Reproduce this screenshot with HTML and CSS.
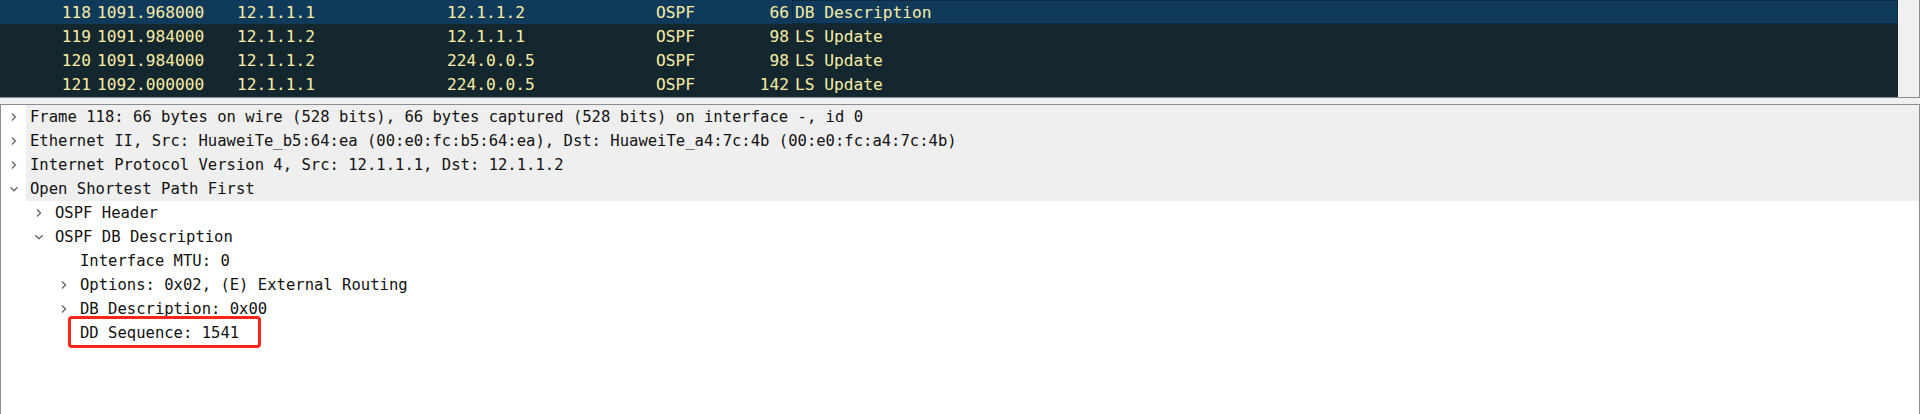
FILE: index.html
```html
<!DOCTYPE html>
<html>
<head>
<meta charset="utf-8">
<link rel="stylesheet" href="styles.css">
</head>
<body>
<div class="app">
  <div class="list-pane">
    <div class="list">
      <div class="prow sel">
        <span class="c no">118</span><span class="c time">1091.968000</span><span class="c src">12.1.1.1</span><span class="c dst">12.1.1.2</span><span class="c proto">OSPF</span><span class="c len">66</span><span class="c info focus">DB Description</span>
      </div>
      <div class="prow">
        <span class="c no">119</span><span class="c time">1091.984000</span><span class="c src">12.1.1.2</span><span class="c dst">12.1.1.1</span><span class="c proto">OSPF</span><span class="c len">98</span><span class="c info">LS Update</span>
      </div>
      <div class="prow">
        <span class="c no">120</span><span class="c time">1091.984000</span><span class="c src">12.1.1.2</span><span class="c dst">224.0.0.5</span><span class="c proto">OSPF</span><span class="c len">98</span><span class="c info">LS Update</span>
      </div>
      <div class="prow">
        <span class="c no">121</span><span class="c time">1092.000000</span><span class="c src">12.1.1.1</span><span class="c dst">224.0.0.5</span><span class="c proto">OSPF</span><span class="c len">142</span><span class="c info">LS Update</span>
      </div>
    </div>
    <div class="vscroll"></div>
  </div>
  <div class="splitter"></div>
  <div class="tree-pane">
    <div class="trow l0 hl"><span class="tw"><svg width="8" height="10" viewBox="0 0 8 10"><path d="M2 1.5 L5.5 5 L2 8.5" class="chev"/></svg></span><span class="lbl">Frame 118: 66 bytes on wire (528 bits), 66 bytes captured (528 bits) on interface -, id 0</span></div>
    <div class="trow l0 hl"><span class="tw"><svg width="8" height="10" viewBox="0 0 8 10"><path d="M2 1.5 L5.5 5 L2 8.5" class="chev"/></svg></span><span class="lbl">Ethernet II, Src: HuaweiTe_b5:64:ea (00:e0:fc:b5:64:ea), Dst: HuaweiTe_a4:7c:4b (00:e0:fc:a4:7c:4b)</span></div>
    <div class="trow l0 hl"><span class="tw"><svg width="8" height="10" viewBox="0 0 8 10"><path d="M2 1.5 L5.5 5 L2 8.5" class="chev"/></svg></span><span class="lbl">Internet Protocol Version 4, Src: 12.1.1.1, Dst: 12.1.1.2</span></div>
    <div class="trow l0 hl"><span class="tw"><svg width="10" height="8" viewBox="0 0 10 8"><path d="M1.5 2.2 L5 5.7 L8.5 2.2" class="chev"/></svg></span><span class="lbl">Open Shortest Path First</span></div>
    <div class="trow l1"><span class="tw"><svg width="8" height="10" viewBox="0 0 8 10"><path d="M2 1.5 L5.5 5 L2 8.5" class="chev"/></svg></span><span class="lbl">OSPF Header</span></div>
    <div class="trow l1"><span class="tw"><svg width="10" height="8" viewBox="0 0 10 8"><path d="M1.5 2.2 L5 5.7 L8.5 2.2" class="chev"/></svg></span><span class="lbl">OSPF DB Description</span></div>
    <div class="trow l2"><span class="tw"></span><span class="lbl">Interface MTU: 0</span></div>
    <div class="trow l2"><span class="tw"><svg width="8" height="10" viewBox="0 0 8 10"><path d="M2 1.5 L5.5 5 L2 8.5" class="chev"/></svg></span><span class="lbl">Options: 0x02, (E) External Routing</span></div>
    <div class="trow l2"><span class="tw"><svg width="8" height="10" viewBox="0 0 8 10"><path d="M2 1.5 L5.5 5 L2 8.5" class="chev"/></svg></span><span class="lbl">DB Description: 0x00</span></div>
    <div class="trow l2"><span class="tw"></span><span class="lbl">DD Sequence: 1541</span></div>
    <div class="mark"></div>
  </div>
</div>
</body>
</html>
```

FILE: styles.css
```css
* { box-sizing: border-box; }
html, body {
  margin: 0;
  padding: 0;
  background: #f0f0f0;
  width: 1920px;
  height: 414px;
  overflow: hidden;
}
.app {
  display: flex;
  flex-direction: column;
  width: 1920px;
  height: 414px;
}
.list-pane {
  display: flex;
  height: 98px;
  border-bottom: 1px solid #8a8e93;
  border-right: 1px solid #8a8e93;
  flex: none;
}
.list {
  width: 1898px;
  background: #15272e;
  padding-bottom: 1px;
  font-family: "DejaVu Sans Mono", monospace;
  font-size: 16.2px;
  color: #f9eda6;
}
.vscroll {
  flex: 1;
  background: #f0f0f0;
}
.prow {
  display: grid;
  grid-template-columns: 94px 140px 210px 209px 69px 70px 1fr;
  height: 24px;
  align-items: stretch;
}
.prow.sel { background: #0f3a5a; }
.c {
  display: flex;
  align-items: center;
  padding: 0 3px;
  white-space: nowrap;
  overflow: hidden;
}
.no, .len { justify-content: flex-end; }
.info { padding-left: 3px; }
.focus { outline: 1px dotted #0a1a24; outline-offset: -1px; }
.splitter {
  height: 6px;
  flex: none;
  background: #f0f0f0;
}
.tree-pane {
  position: relative;
  flex: 1;
  background: #ffffff;
  border: 1px solid #8a8e93;
  border-bottom: none;
  font-family: "DejaVu Sans Mono", monospace;
  font-size: 15.55px;
  color: #111111;
}
.trow {
  display: flex;
  height: 24px;
  align-items: stretch;
}
.trow.l1 { padding-left: 25px; }
.trow.l2 { padding-left: 50px; }
.tw {
  width: 25px;
  flex: none;
  display: flex;
  align-items: center;
  justify-content: center;
}
.lbl {
  flex: 1;
  display: flex;
  align-items: center;
  padding-left: 4px;
  white-space: nowrap;
}
.hl .lbl { background: #efefef; }
.chev {
  fill: none;
  stroke: #6a6a6a;
  stroke-width: 1.4;
}
.mark {
  position: absolute;
  left: 67px;
  top: 211px;
  width: 193px;
  height: 32px;
  border: 3px solid #ff2418;
  border-radius: 4px;
}
```
